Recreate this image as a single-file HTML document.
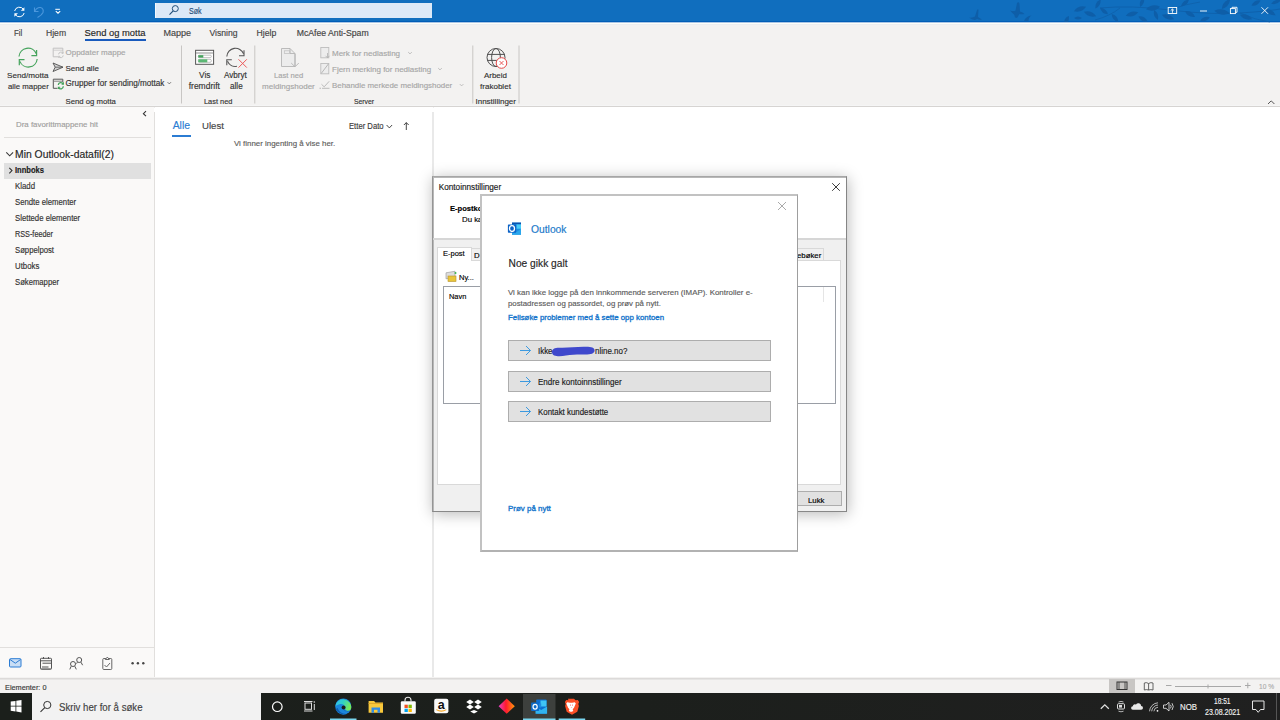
<!DOCTYPE html>
<html><head><meta charset="utf-8"><style>
html,body{margin:0;padding:0;width:1280px;height:720px;overflow:hidden;background:#fff}
body{position:relative;font-family:"Liberation Sans", sans-serif}
body>div{position:absolute}
.t{white-space:nowrap;-webkit-text-stroke:0.15px currentColor}
</style></head><body>
<div style="left:0px;top:0px;width:1280px;height:22px;background:#106ebe"></div><div style="left:0px;top:21px;width:1280px;height:1px;background:#005db6"></div><div style="left:155px;top:3px;width:277px;height:15px;background:#dce9f7"></div><div style="left:155px;top:3px;width:1px;height:15px;background:#f3f8fd"></div><div style="left:0px;top:23px;width:1280px;height:83px;background:#f3f2f1"></div><div style="left:0px;top:22px;width:1280px;height:1px;background:#a9c5e5"></div><div style="left:0px;top:23px;width:1280px;height:1px;background:#fefef8"></div><div style="left:0px;top:24px;width:1280px;height:1px;background:#eceef0"></div><div style="left:0px;top:105px;width:1280px;height:1px;background:#f5f5f5"></div><div style="left:0px;top:106px;width:1280px;height:1px;background:#d6d4d2"></div><div style="left:0px;top:107px;width:1280px;height:1px;background:#efefef"></div><div style="left:0px;top:107px;width:154px;height:570px;background:#faf9f8"></div><div style="left:154px;top:112px;width:1px;height:565px;background:#e1dfdd"></div><div style="left:155px;top:107px;width:278px;height:570px;background:#ffffff"></div><div style="left:432px;top:112px;width:2px;height:565px;background:#e9e9e9"></div><div style="left:434px;top:107px;width:846px;height:570px;background:#ffffff"></div><div style="left:0px;top:677px;width:1280px;height:16px;background:#f3f2f1"></div><div style="left:0px;top:678px;width:1280px;height:1px;background:#dcdad9"></div><div style="left:0px;top:679px;width:1280px;height:1px;background:#e6e5e4"></div><div style="left:0px;top:693px;width:1280px;height:27px;background:linear-gradient(90deg,#1b1f1b 0%,#1c1f1c 50%,#202020 100%)"></div><div style="left:32px;top:693px;width:229px;height:27px;background:#f2f2f2"></div><div class="t" style="left:14px;top:29px;font-size:8.8px;line-height:8.8px;color:#444444;font-weight:400;transform:scaleX(0.8928);transform-origin:0 0;">Fil</div><div class="t" style="left:46px;top:29px;font-size:8.6px;line-height:8.6px;color:#444444;font-weight:400;">Hjem</div><div class="t" style="left:84.5px;top:28px;font-size:9.4px;line-height:9.4px;color:#262626;font-weight:400;">Send og motta</div><div style="left:85px;top:39px;width:61px;height:2px;background:#185abd"></div><div class="t" style="left:163.5px;top:29px;font-size:9.0px;line-height:9.0px;color:#444444;font-weight:400;">Mappe</div><div class="t" style="left:209.5px;top:29px;font-size:8.65px;line-height:8.65px;color:#444444;font-weight:400;">Visning</div><div class="t" style="left:256.5px;top:29px;font-size:8.7px;line-height:8.7px;color:#444444;font-weight:400;">Hjelp</div><div class="t" style="left:296.7px;top:29px;font-size:8.7px;line-height:8.7px;color:#444444;font-weight:400;">McAfee Anti-Spam</div><div class="t" style="left:189.4px;top:7px;font-size:9.0px;line-height:9.0px;color:#1f4e79;font-weight:400;transform:scaleX(0.7867);transform-origin:0 0;">Søk</div><div class="t" style="left:7px;top:72px;font-size:8.1px;line-height:8.1px;color:#333333;font-weight:400;">Send/motta</div><div class="t" style="left:8px;top:83px;font-size:7.8px;line-height:7.8px;color:#333333;font-weight:400;">alle mapper</div><div class="t" style="left:65.5px;top:49px;font-size:8.0px;line-height:8.0px;color:#a6a6a6;font-weight:400;">Oppdater mappe</div><div class="t" style="left:65.5px;top:65px;font-size:8.0px;line-height:8.0px;color:#333333;font-weight:400;">Send alle</div><div class="t" style="left:65.5px;top:80px;font-size:8.15px;line-height:8.15px;color:#333333;font-weight:400;">Grupper for sending/mottak</div><div class="t" style="left:65.5px;top:98px;font-size:7.75px;line-height:7.75px;color:#333333;font-weight:400;">Send og motta</div><div class="t" style="left:199px;top:71px;font-size:8.3px;line-height:8.3px;color:#333333;font-weight:400;">Vis</div><div class="t" style="left:188.7px;top:82px;font-size:8.5px;line-height:8.5px;color:#333333;font-weight:400;">fremdrift</div><div class="t" style="left:224px;top:72px;font-size:8.15px;line-height:8.15px;color:#333333;font-weight:400;">Avbryt</div><div class="t" style="left:230px;top:83px;font-size:8.15px;line-height:8.15px;color:#333333;font-weight:400;">alle</div><div class="t" style="left:204px;top:98px;font-size:7.4px;line-height:7.4px;color:#333333;font-weight:400;">Last ned</div><div class="t" style="left:274px;top:72px;font-size:7.6px;line-height:7.6px;color:#a6a6a6;font-weight:400;">Last ned</div><div class="t" style="left:262px;top:83px;font-size:8.05px;line-height:8.05px;color:#a6a6a6;font-weight:400;">meldingshoder</div><div class="t" style="left:332px;top:50px;font-size:8.0px;line-height:8.0px;color:#a6a6a6;font-weight:400;">Merk for nedlasting</div><div class="t" style="left:332px;top:66px;font-size:8.0px;line-height:8.0px;color:#a6a6a6;font-weight:400;">Fjern merking for nedlasting</div><div class="t" style="left:332px;top:82px;font-size:7.9px;line-height:7.9px;color:#a6a6a6;font-weight:400;">Behandle merkede meldingshoder</div><div class="t" style="left:353.5px;top:98px;font-size:8.0px;line-height:8.0px;color:#333333;font-weight:400;transform:scaleX(0.8531);transform-origin:0 0;">Server</div><div class="t" style="left:484px;top:72px;font-size:7.95px;line-height:7.95px;color:#333333;font-weight:400;">Arbeid</div><div class="t" style="left:480px;top:83px;font-size:8.05px;line-height:8.05px;color:#333333;font-weight:400;">frakoblet</div><div class="t" style="left:475.5px;top:98px;font-size:8.0px;line-height:8.0px;color:#333333;font-weight:400;">Innstillinger</div><div class="t" style="left:16px;top:121px;font-size:7.9px;line-height:7.9px;color:#a19f9d;font-weight:400;">Dra favorittmappene hit</div><div style="left:4px;top:137px;width:147px;height:1px;background:#e1dfdd"></div><div class="t" style="left:15px;top:150px;font-size:10.36px;line-height:10.36px;color:#262626;font-weight:400;">Min Outlook-datafil(2)</div><div style="left:4px;top:163px;width:147px;height:16px;background:#e0e0e0"></div><div class="t" style="left:15px;top:166px;font-size:8.6px;line-height:8.6px;color:#1b1b1b;font-weight:700;transform:scaleX(0.8800);transform-origin:0 0;">Innboks</div><div class="t" style="left:14.8px;top:182px;font-size:8.4px;line-height:8.4px;color:#323130;font-weight:400;transform:scaleX(0.9336);transform-origin:0 0;">Kladd</div><div class="t" style="left:14.8px;top:198px;font-size:8.4px;line-height:8.4px;color:#323130;font-weight:400;transform:scaleX(0.9255);transform-origin:0 0;">Sendte elementer</div><div class="t" style="left:14.8px;top:214px;font-size:8.4px;line-height:8.4px;color:#323130;font-weight:400;transform:scaleX(0.9273);transform-origin:0 0;">Slettede elementer</div><div class="t" style="left:14.8px;top:230px;font-size:8.4px;line-height:8.4px;color:#323130;font-weight:400;transform:scaleX(0.8683);transform-origin:0 0;">RSS-feeder</div><div class="t" style="left:14.8px;top:246px;font-size:8.4px;line-height:8.4px;color:#323130;font-weight:400;transform:scaleX(0.9204);transform-origin:0 0;">Søppelpost</div><div class="t" style="left:14.8px;top:262px;font-size:8.4px;line-height:8.4px;color:#323130;font-weight:400;transform:scaleX(0.9318);transform-origin:0 0;">Utboks</div><div class="t" style="left:14.8px;top:278px;font-size:8.4px;line-height:8.4px;color:#323130;font-weight:400;transform:scaleX(0.9176);transform-origin:0 0;">Søkemapper</div><div style="left:0px;top:647px;width:154px;height:1px;background:#e1dfdd"></div><div class="t" style="left:172.7px;top:121px;font-size:10.4px;line-height:10.4px;color:#2b7cd3;font-weight:400;">Alle</div><div style="left:172px;top:135px;width:19px;height:1.5px;background:#2b7cd3"></div><div class="t" style="left:202px;top:121px;font-size:9.65px;line-height:9.65px;color:#444;font-weight:400;">Ulest</div><div class="t" style="left:348.6px;top:122px;font-size:9.0px;line-height:9.0px;color:#3b3a39;font-weight:400;transform:scaleX(0.8537);transform-origin:0 0;">Etter Dato</div><div class="t" style="left:234px;top:140px;font-size:7.9px;line-height:7.9px;color:#605e5c;font-weight:400;">Vi finner ingenting å vise her.</div><div class="t" style="left:5px;top:684px;font-size:7.6px;line-height:7.6px;color:#383838;font-weight:400;transform:scaleX(0.9637);transform-origin:0 0;">Elementer: 0</div><div class="t" style="left:1259px;top:683px;font-size:8.0px;line-height:8.0px;color:#ababab;font-weight:400;transform:scaleX(0.8226);transform-origin:0 0;">10 %</div><div class="t" style="left:58.5px;top:703px;font-size:10.4px;line-height:10.4px;color:#404040;font-weight:400;transform:scaleX(0.9270);transform-origin:0 0;">Skriv her for å søke</div><div class="t" style="left:1180px;top:702px;font-size:9.4px;line-height:9.4px;color:#f0f0f0;font-weight:400;transform:scaleX(0.8363);transform-origin:0 0;">NOB</div><div class="t" style="left:1214px;top:697px;font-size:9.0px;line-height:9.0px;color:#f0f0f0;font-weight:400;transform:scaleX(0.7323);transform-origin:0 0;">18:51</div><div class="t" style="left:1204.8px;top:708px;font-size:8.3px;line-height:8.3px;color:#f0f0f0;font-weight:400;transform:scaleX(0.8476);transform-origin:0 0;">23.08.2021</div><svg style="position:absolute;left:0;top:0" width="1280" height="720" viewBox="0 0 1280 720"><path d="M969 17.5q4 0.5 6-1l2-6.5q1-1.5 1.5 0l-0.5 7q2 1 4 2.5q-3 0.5-5-0.5q-3 2.5-8-1.5z" fill="#0e5ea8"/><path d="M1010 10.5q4 1 5.5 0l1.5-7.5q1.5-1.5 2.5 0.5l0.5 8q3 0.5 4.5 2.5q-3 0.5-5 0l-2.5 4q-3 0-2.5-3q-2-1.5-4.5-4.5z" fill="#0e5ea8"/><path d="M1024 21q2-5 7.5-5.5q-3 2-3 5.5z" fill="#0e5ea8"/><path d="M1064 22q1-5 5-6q0 4-1 6z" fill="#0e5ea8"/><path d="M1100 8Q1130 5 1170 10T1240 13T1280 9" stroke="#0e5ea8" stroke-width="0.8" fill="none"/><path d="M1120 8Q1110 16 1095 20M1170 10Q1185 4 1200 2M1240 13Q1255 20 1270 22" stroke="#0e5ea8" stroke-width="0.7" fill="none"/><path d="M-6.5 0Q0 -4.5 6.5 0Q0 4.5 -6.5 0Z" transform="translate(1080 9) rotate(-20)" fill="#0e5ea8"/><path d="M-6.5 0Q0 -4.5 6.5 0Q0 4.5 -6.5 0Z" transform="translate(1090 14) rotate(20)" fill="#0e5ea8"/><path d="M-5.2 0Q0 -3.75 5.2 0Q0 3.75 -5.2 0Z" transform="translate(1098 4) rotate(-60)" fill="#0e5ea8"/><path d="M-5.2 0Q0 -3.75 5.2 0Q0 3.75 -5.2 0Z" transform="translate(1104 11) rotate(40)" fill="#0e5ea8"/><path d="M-3.9000000000000004 0Q0 -3.0 3.9000000000000004 0Q0 3.0 -3.9000000000000004 0Z" transform="translate(1078 18) rotate(0)" fill="#0e5ea8"/><path d="M-6.5 0Q0 -4.5 6.5 0Q0 4.5 -6.5 0Z" transform="translate(1132 14) rotate(-15)" fill="#0e5ea8"/><path d="M-5.2 0Q0 -3.75 5.2 0Q0 3.75 -5.2 0Z" transform="translate(1143 19) rotate(30)" fill="#0e5ea8"/><path d="M-7.15 0Q0 -5.25 7.15 0Q0 5.25 -7.15 0Z" transform="translate(1153 8) rotate(-10)" fill="#0e5ea8"/><path d="M-5.2 0Q0 -3.75 5.2 0Q0 3.75 -5.2 0Z" transform="translate(1156 15) rotate(70)" fill="#0e5ea8"/><path d="M-5.2 0Q0 -3.75 5.2 0Q0 3.75 -5.2 0Z" transform="translate(1142 2) rotate(-70)" fill="#0e5ea8"/><path d="M-6.5 0Q0 -4.5 6.5 0Q0 4.5 -6.5 0Z" transform="translate(1168 17) rotate(20)" fill="#0e5ea8"/><path d="M-5.2 0Q0 -3.75 5.2 0Q0 3.75 -5.2 0Z" transform="translate(1185 3) rotate(-40)" fill="#0e5ea8"/><path d="M-5.8500000000000005 0Q0 -4.5 5.8500000000000005 0Q0 4.5 -5.8500000000000005 0Z" transform="translate(1190 14) rotate(30)" fill="#0e5ea8"/><path d="M-7.800000000000001 0Q0 -5.25 7.800000000000001 0Q0 5.25 -7.800000000000001 0Z" transform="translate(1222 12) rotate(10)" fill="#0e5ea8"/><path d="M-6.5 0Q0 -4.5 6.5 0Q0 4.5 -6.5 0Z" transform="translate(1226 4) rotate(-50)" fill="#0e5ea8"/><path d="M-6.5 0Q0 -4.5 6.5 0Q0 4.5 -6.5 0Z" transform="translate(1246 17) rotate(20)" fill="#0e5ea8"/><path d="M-5.2 0Q0 -3.75 5.2 0Q0 3.75 -5.2 0Z" transform="translate(1256 3) rotate(-30)" fill="#0e5ea8"/><path d="M-6.5 0Q0 -4.5 6.5 0Q0 4.5 -6.5 0Z" transform="translate(1270 12) rotate(30)" fill="#0e5ea8"/><path d="M-5.2 0Q0 -3.75 5.2 0Q0 3.75 -5.2 0Z" transform="translate(1276 2) rotate(-20)" fill="#0e5ea8"/><path d="M-5.2 0Q0 -3.75 5.2 0Q0 3.75 -5.2 0Z" transform="translate(1205 19) rotate(-20)" fill="#0e5ea8"/><path d="M-5.2 0Q0 -3.75 5.2 0Q0 3.75 -5.2 0Z" transform="translate(1115 18) rotate(50)" fill="#0e5ea8"/><path d="M14.6 11 A4.9 4.9 0 0 1 23.6 9.6" stroke="#fff" stroke-width="1" fill="none"/><path d="M24.4 7.2v3.6h-3.6z" fill="#fff"/><path d="M24.2 13 A4.9 4.9 0 0 1 15.2 14.4" stroke="#fff" stroke-width="1" fill="none"/><path d="M14.4 16.8v-3.6h3.6z" fill="#fff"/><path d="M34.5 11.5 Q37 7 40.5 7.5 Q44 8.5 43 12.5 Q42 15 37.5 17.5" stroke="#4b97dc" stroke-width="1.1" fill="none"/><path d="M34.5 7.5v4h4" stroke="#4b97dc" stroke-width="1.1" fill="none"/><path d="M55.3 9.3h4.6" stroke="#fff" stroke-width="1"/><path d="M55.8 11.2l2.2 2l2.2-2" stroke="#fff" stroke-width="1.1" fill="none"/><circle cx="175.3" cy="8.6" r="3" stroke="#1f4e79" stroke-width="1" fill="none"/><path d="M173.2 10.8L169.5 14.6" stroke="#1f4e79" stroke-width="1.1"/><rect x="1168.2" y="7.5" width="8.5" height="6" stroke="#fff" stroke-width="0.9" fill="none"/><path d="M1172.4 12.8v-3.6M1170.7 10.6l1.7-1.6l1.7 1.6" stroke="#fff" stroke-width="0.9" fill="none"/><path d="M1200 11h7" stroke="#fff" stroke-width="0.9"/><rect x="1230.4" y="8.6" width="5" height="5" stroke="#fff" stroke-width="0.9" fill="none"/><path d="M1232 8.6v-1.3h5v5h-1.5" stroke="#fff" stroke-width="0.9" fill="none"/><path d="M1261.5 7.3l6.5 6.5M1268 7.3l-6.5 6.5" stroke="#fff" stroke-width="0.9"/><path d="M19 56.5 A9 9 0 0 1 36.3 53.8" stroke="#45a35c" stroke-width="1.2" fill="none"/><path d="M36.6 50v5.6h-5.2" stroke="#45a35c" stroke-width="1.2" fill="none"/><path d="M37.2 59 A9 9 0 0 1 19.9 61.4" stroke="#45a35c" stroke-width="1.2" fill="none"/><path d="M19.3 65.3v-5.6h5.2" stroke="#45a35c" stroke-width="1.2" fill="none"/><path d="M58 56.8H53.2V48.2h9.6v3.5" stroke="#bcbcbc" stroke-width="0.9" fill="none"/><path d="M53.2 50.2h9.6" stroke="#c8c8c8" stroke-width="0.8"/><path d="M58.6 54.3 a2.4 2.4 0 0 1 4.4-1.1 M63.2 55.4 a2.4 2.4 0 0 1-4.4 1.2" stroke="#bdbdbd" stroke-width="0.9" fill="none"/><path d="M63.2 51.8v1.6h-1.6M58.6 57.9v-1.6h1.6" stroke="#bdbdbd" stroke-width="0.8" fill="none"/><path d="M53 63l10 4.2l-10 4.3l2.2-4.3z" stroke="#505050" stroke-width="0.9" fill="#d4d4d4" stroke-linejoin="round"/><path d="M55.2 67.2H63" stroke="#505050" stroke-width="0.8"/><path d="M57.5 88.3H53.3V79.2h9.5v3" stroke="#555" stroke-width="1" fill="none"/><path d="M53.3 81.2h9.5" stroke="#777" stroke-width="0.9"/><path d="M58.3 85 a2.6 2.6 0 0 1 4.8-1.2 M63.3 86.3 a2.6 2.6 0 0 1-4.8 1.4" stroke="#45a35c" stroke-width="1.3" fill="none"/><path d="M63.4 82.3v1.8h-1.8M58.4 89.1v-1.8h1.8" stroke="#45a35c" stroke-width="1.1" fill="none"/><rect x="195.6" y="50.3" width="18" height="14" stroke="#555" stroke-width="1" fill="#fff"/><path d="M196 53h17.2" stroke="#a0a0a0" stroke-width="1.2"/><rect x="198.3" y="55.2" width="13" height="2.4" rx="1" stroke="#9a9a9a" stroke-width="0.6" fill="#fff"/><rect x="198.3" y="55.2" width="5" height="2.4" fill="#45a35c"/><rect x="198.3" y="59.3" width="13" height="3" rx="1.2" stroke="#9a9a9a" stroke-width="0.6" fill="#fff"/><rect x="198.3" y="59.3" width="9" height="3" fill="#5cb874"/><path d="M226.8 56.5 A8.7 8.7 0 0 1 243.6 53.8" stroke="#555" stroke-width="1.1" fill="none"/><path d="M244 50.3v5.5h-5" stroke="#555" stroke-width="1.1" fill="none"/><path d="M237 66.3 A8.7 8.7 0 0 1 227.5 61.2" stroke="#555" stroke-width="1.1" fill="none"/><path d="M226.8 65.3v-5.5h5" stroke="#555" stroke-width="1.1" fill="none"/><path d="M238.5 59.3l8.3 8.3M246.8 59.3l-8.3 8.3" stroke="#ec5b5b" stroke-width="1"/><path d="M281.5 48.5h8.5l5 5v13h-13.5z" stroke="#b4b4b4" stroke-width="0.9" fill="#ececec"/><path d="M290 48.5v5h5" stroke="#b4b4b4" stroke-width="0.9" fill="none"/><rect x="284.3" y="50.8" width="5.5" height="2.6" stroke="#bdbdbd" stroke-width="0.7" fill="none"/><path d="M295 54v12.5M291.2 63l3.8 3.8l3.8-3.8" stroke="#b4b4b4" stroke-width="0.9" fill="none"/><rect x="320.8" y="47.5" width="8" height="10.3" stroke="#bdbdbd" stroke-width="0.9" fill="#ededed"/><path d="M327.5 53v4.5M325.5 55.8l2 2l2-2" stroke="#b0b0b0" stroke-width="0.8" fill="none"/><rect x="320.8" y="63.5" width="8" height="10.3" stroke="#bdbdbd" stroke-width="0.9" fill="#ededed"/><path d="M321.2 73.5l7.3-9.7" stroke="#b0b0b0" stroke-width="0.9"/><path d="M321.5 84.3l2.7 2.5l5-5.5" stroke="#b4b4b4" stroke-width="0.9" fill="none"/><path d="M322 88.3h7.5" stroke="#b4b4b4" stroke-width="0.9"/><rect x="319.6" y="87.7" width="1.2" height="1.2" fill="#b4b4b4"/><path d="M408.2 52.1l1.8 1.8l1.8-1.8" stroke="#b0b0b0" stroke-width="0.8" fill="none"/><path d="M438.2 68.1l1.8 1.8l1.8-1.8" stroke="#b0b0b0" stroke-width="0.8" fill="none"/><path d="M459.8 84.1l1.8 1.8l1.8-1.8" stroke="#b0b0b0" stroke-width="0.8" fill="none"/><path d="M167.6 82.2l1.7 1.7l1.7-1.7" stroke="#555" stroke-width="0.8" fill="none"/><circle cx="496" cy="57.5" r="9" stroke="#505050" stroke-width="1" fill="none"/><ellipse cx="496" cy="57.5" rx="4.4" ry="9" stroke="#505050" stroke-width="1" fill="none"/><path d="M487.5 54.4h17M487.5 60.4h17" stroke="#505050" stroke-width="1"/><circle cx="501.5" cy="63" r="5.3" fill="#fff" stroke="#e64a4a" stroke-width="1"/><path d="M499.5 61l4 4M503.5 61l-4 4" stroke="#e64a4a" stroke-width="0.9"/><path d="M181.5 45.5V103.5" stroke="#c8c6c4" stroke-width="1"/><path d="M254.8 45.5V103.5" stroke="#c8c6c4" stroke-width="1"/><path d="M472.8 45.5V103.5" stroke="#c8c6c4" stroke-width="1"/><path d="M519 45.5V103.5" stroke="#c8c6c4" stroke-width="1"/><path d="M1268 104l3.2-3.2l3.2 3.2" stroke="#444" stroke-width="0.9" fill="none"/><path d="M146 111.2l-2.6 2.5l2.6 2.5" stroke="#333" stroke-width="1.1" fill="none"/><path d="M6.3 152.3l3.4 3.5l3.4-3.5" stroke="#3a3a3a" stroke-width="1.1" fill="none"/><path d="M9.3 167.8l2.7 2.8l-2.7 2.8" stroke="#333" stroke-width="1.1" fill="none"/><path d="M386.6 125l2.75 2.9l2.75-2.9" stroke="#333" stroke-width="0.9" fill="none"/><path d="M406.3 130V122.6M403.9 125l2.4-2.4l2.4 2.4" stroke="#333" stroke-width="0.9" fill="none"/><rect x="9.5" y="658.7" width="11.5" height="8.3" rx="1" stroke="#2b7cd3" stroke-width="1" fill="#c9def5"/><path d="M10 659.5l5.3 3.7l5.3-3.7" stroke="#2b7cd3" stroke-width="1" fill="none"/><rect x="40.5" y="658.3" width="11" height="11" rx="0.8" stroke="#555" stroke-width="1" fill="none"/><path d="M40.5 660.8h11M42.5 663.2h8.5M42 667h6.5M43.5 657v2M48.5 657v2" stroke="#555" stroke-width="1"/><path d="M41 668.5h10" stroke="#999" stroke-width="1"/><circle cx="73" cy="664" r="2.5" stroke="#555" stroke-width="1" fill="none"/><path d="M71.2 666.2L69.8 669.4M74.8 666.2L76.3 669.4" stroke="#555" stroke-width="1" fill="none"/><circle cx="79.2" cy="660" r="2.5" stroke="#555" stroke-width="1" fill="none"/><path d="M81 662.2L82.6 665.2M77.4 662.2L76.6 663.6" stroke="#555" stroke-width="1" fill="none"/><rect x="102.8" y="658.5" width="9" height="11" rx="1" stroke="#666" stroke-width="1" fill="none"/><path d="M105.3 659.5 l1.5-2 h1 l1.5 2 z" stroke="#666" stroke-width="1" fill="#fff"/><path d="M104.5 665l2 2l3.5-4" stroke="#666" stroke-width="1" fill="none"/><circle cx="132.6" cy="663.3" r="1.2" fill="#444"/><circle cx="137.9" cy="663.3" r="1.2" fill="#444"/><circle cx="143.3" cy="663.3" r="1.2" fill="#444"/><rect x="1109" y="679" width="26" height="14" fill="#c8c6c4"/><rect x="1117" y="682" width="10" height="7.5" stroke="#333" stroke-width="1" fill="none"/><path d="M1119 682v7.5M1125 682v7.5" stroke="#333" stroke-width="0.8"/><path d="M1144.3 683v7M1153 683v7M1148.6 683.5v6.5" stroke="#555" stroke-width="0.9"/><path d="M1144.3 683q2-1 4.3 0.5q2.3-1.5 4.4-0.5M1144.3 690q2-0.8 4.3 0q2.3-0.8 4.4 0" stroke="#555" stroke-width="0.9" fill="none"/><path d="M1166 685.5h5.5M1175 686.5h66M1245 685.5h5.5M1247.8 682.7v5.6M1208 684.5v4" stroke="#a8a8a8" stroke-width="1"/><path d="M10.7 701.6l4.8-0.7v4.9h-4.8zM16.3 700.8l5.2-0.8v5.8h-5.2zM10.7 706.6h4.8v4.9l-4.8-0.7zM16.3 706.6h5.2v5.8l-5.2-0.8z" fill="#fff"/><circle cx="47.3" cy="705" r="3.6" stroke="#333" stroke-width="1" fill="none"/><path d="M44.8 707.6L40.5 711.8" stroke="#333" stroke-width="1.1"/><circle cx="277.3" cy="706.7" r="4.8" stroke="#fff" stroke-width="1.2" fill="none"/><rect x="305" y="703" width="6.5" height="6.3" stroke="#ddd" stroke-width="1" fill="none"/><path d="M304 701.5h8.5M304 711h8.5M314.3 704v6" stroke="#ddd" stroke-width="1"/><circle cx="314.3" cy="702" r="0.8" fill="#ddd"/><defs><linearGradient id="eg" x1="0" y1="0" x2="1" y2="0.3"><stop offset="0" stop-color="#33bdf2"/><stop offset="0.5" stop-color="#2fd0c8"/><stop offset="1" stop-color="#74ea5c"/></linearGradient><linearGradient id="eg2" x1="0" y1="0" x2="1" y2="0"><stop offset="0" stop-color="#4bd08a"/><stop offset="1" stop-color="#7fe07a"/></linearGradient><linearGradient id="dg" x1="0" y1="0" x2="1" y2="0"><stop offset="0" stop-color="#e840c8"/><stop offset="0.45" stop-color="#ff1a2e"/><stop offset="1" stop-color="#ff9a0a"/></linearGradient></defs><g transform="translate(343.3 706.6)"><circle r="8.1" fill="#1a86dd"/><path d="M-8 -0.8 A8.1 8.1 0 0 1 8 1.5 C7.6 3.6 5.4 4.6 3.6 4 C1.8 3.4 1.3 1.6 1.5 0.2 C1.4 -1.8 -0.8 -3 -3 -2.6 C-5.2 -2.2 -6.8 -1.2 -8 -0.8Z" fill="url(#eg)"/><ellipse cx="0.3" cy="0.9" rx="2" ry="1.9" fill="#1c1e1c"/><path d="M0.3 2.8 C1.5 4.4 3.8 5 6.2 4.2 C4 5.2 1.8 5 0.3 2.8Z" fill="#123a5a"/><path d="M-7.5 2.5 C-6 6.5 -1 8.6 3.5 7.4 C-0.5 7.6 -4.5 5.5 -5.6 1.5Z" fill="#0f5db0"/></g><path d="M368.6 701h5.5l1.3 1.5h7.6v10.3h-14.4z" fill="#f8c83c"/><path d="M368.6 703.5h14.4" stroke="#e0a82a" stroke-width="1"/><path d="M371.5 707.5h8.5v5.3h-2.5v-3h-3.5v3h-2.5z" fill="#2f8be6"/><path d="M405 701.5v-1.2a3 3 0 0 1 6 0v1.2" stroke="#e8e8e8" stroke-width="1.1" fill="none"/><rect x="400.8" y="701.2" width="15" height="12.5" rx="1.2" fill="#fafafa"/><rect x="404.5" y="704.7" width="3.3" height="3.3" fill="#f25022"/><rect x="408.5" y="704.7" width="3.3" height="3.3" fill="#7fba00"/><rect x="404.5" y="708.7" width="3.3" height="3.3" fill="#00a4ef"/><rect x="408.5" y="708.7" width="3.3" height="3.3" fill="#ffb900"/><rect x="434.2" y="698.7" width="14.2" height="14.5" rx="2" fill="#fafafa"/><text x="441.3" y="709.3" text-anchor="middle" font-family="Liberation Sans" font-weight="700" font-size="12.5" fill="#111">a</text><path d="M436.3 709.6 q5 3 10 0" stroke="#f5a623" stroke-width="1.1" fill="none"/><path d="M470 699.5l-3.8 2.5l3.8 2.5l3.8-2.5zM478 699.5l-3.8 2.5l3.8 2.5l3.8-2.5zM470 704.5l-3.8 2.5l3.8 2.5l3.8-2.5zM478 704.5l-3.8 2.5l3.8 2.5l3.8-2.5zM474 710l-3.8 1.5l3.8 2l3.8-2z" fill="#fff"/><path d="M506.7 698.6l8.1 7.6l-8.1 7.6l-8.1-7.6z" fill="url(#dg)"/><rect x="523" y="694" width="32.5" height="26" fill="#3d403d"/><rect x="536.2" y="699.4" width="10.4" height="14.3" rx="0.8" fill="#0d6fd0"/><rect x="540.5" y="700.5" width="6" height="6" fill="#3fc4f5"/><rect x="536.2" y="703.5" width="5" height="4" fill="#1e8be0"/><path d="M535.5 706.5l5.7 3.4l5.9-3.4v7.2h-11.6z" fill="#31b4f0"/><rect x="531.1" y="702.6" width="8" height="8.4" rx="0.8" fill="#0f6cc9"/><ellipse cx="535.1" cy="706.8" rx="2.1" ry="2.4" stroke="#fff" stroke-width="1.2" fill="none"/><path d="M568 698.8h6l1.6 1.4l2.2-0.3l1.3 2.2l-0.8 1.8l0.6 2l-1.6 5.8l-5.3 3l-5.3-3l-1.6-5.8l0.6-2l-0.8-1.8l1.3-2.2l2.2 0.3z" fill="#fb4f26"/><path d="M567.3 702.2l2.7 0.5h2.1l2.7-0.5l1 1.3l-1.8 4.2l-1.3 1.6l0.6 1.8l-1.6 0.6h-1.3l-1.6-0.6l0.6-1.8l-1.3-1.6l-1.8-4.2z" fill="#fff"/><path d="M570 704.5h1v1.2h-1zM572 704.5h1v1.2h-1zM570.6 707l0.9 0.8l0.9-0.8" fill="#f88" stroke="none"/><rect x="330" y="718.5" width="26.5" height="1.5" fill="#7ad7f0"/><rect x="523" y="718.5" width="32.5" height="1.5" fill="#7ad7f0"/><rect x="558.7" y="718.5" width="26.5" height="1.5" fill="#7ad7f0"/><path d="M1100.8 708.8l4-4l4 4" stroke="#e0e0e0" stroke-width="1.25" fill="none"/><rect x="1117.5" y="703.7" width="7" height="5.3" rx="1" stroke="#ddd" stroke-width="1" fill="none"/><rect x="1119" y="705" width="3" height="2.6" fill="#ddd"/><path d="M1118.5 702q2.5-1.2 5 0M1118.5 711.2q2.5 1.2 5 0" stroke="#ddd" stroke-width="0.8" fill="none"/><path d="M1132.8 709.7h8.2a1.9 1.9 0 0 0 0.2-3.8a2.8 2.8 0 0 0-5.2-1.3a2.2 2.2 0 0 0-3.2 1.7a1.7 1.7 0 0 0 0 3.4z" fill="#e8e8e8"/><path d="M1149.5 711.3a9 9 0 0 1 8.5-8.5M1151.7 711.3a6.6 6.6 0 0 1 6.3-6.3M1153.9 711.3a4.4 4.4 0 0 1 4.1-4.1" stroke="#ddd" stroke-width="0.8" fill="none"/><circle cx="1157.5" cy="710.8" r="0.9" fill="#fff"/><path d="M1163.5 705h2.5l3-2.7v8.7l-3-2.7h-2.5z" stroke="#ddd" stroke-width="0.9" fill="none"/><path d="M1170.5 704.8q1.3 1.8 0 3.6M1172 703.2q2.5 3.4 0 6.8" stroke="#ddd" stroke-width="0.9" fill="none"/><path d="M1252.5 701h11.5v8.5h-3.5l-2.3 2.8l-2.3-2.8h-3.4z" stroke="#e6e6e6" stroke-width="1" fill="none"/><path d="M1276.5 693v27" stroke="#555" stroke-width="1"/></svg><div style="left:432px;top:176px;width:415px;height:336px;box-sizing:border-box;background:#f0f0f0;border:1px solid;border-color:#a6a6a6 #858585 #888888 #959595;box-shadow:1px 2px 14px rgba(0,0,0,0.28), inset 1px 1px 0 #b8b8b8"></div><div style="left:434px;top:178px;width:412px;height:60px;background:#ffffff"></div><div style="left:433px;top:238px;width:413px;height:2px;background:#d6d6d6"></div><div class="t" style="left:438.75px;top:184px;font-size:8.2px;line-height:8.2px;color:#1a1a1a;font-weight:400;">Kontoinnstillinger</div><svg style="position:absolute;left:831px;top:182px;" width="10" height="10" viewBox="0 0 10 10"><path d="M1.2 1.2L8.8 8.8M8.8 1.2L1.2 8.8" stroke="#1a1a1a" stroke-width="0.85"/></svg><div class="t" style="left:450px;top:205px;font-size:7.6px;line-height:7.6px;color:#000;font-weight:700;">E-postko</div><div class="t" style="left:462px;top:216px;font-size:7.8px;line-height:7.8px;color:#000;font-weight:400;">Du ka</div><div style="left:471px;top:248px;width:40px;height:13px;box-sizing:border-box;background:#f0f0f0;border:1px solid #d9d9d9;border-bottom:none"></div><div class="t" style="left:474px;top:252px;font-size:7.8px;line-height:7.8px;color:#000;font-weight:400;">D</div><div style="left:780px;top:248px;width:44px;height:13px;box-sizing:border-box;background:#f0f0f0;border:1px solid #d9d9d9;border-bottom:none"></div><div class="t" style="left:797px;top:252px;font-size:7.8px;line-height:7.8px;color:#000;font-weight:400;">ebøker</div><div style="left:437px;top:260px;width:404px;height:225px;box-sizing:border-box;background:#fff;border:1px solid #d9d9d9;border-top-color:#d9d9d9"></div><div style="left:437px;top:247px;width:35px;height:14px;box-sizing:border-box;background:#fff;border:1px solid #d9d9d9;border-bottom:none"></div><div style="left:438px;top:259px;width:33px;height:2px;background:#fff"></div><div class="t" style="left:443px;top:250px;font-size:7.5px;line-height:7.5px;color:#000;font-weight:400;">E-post</div><svg style="position:absolute;left:445px;top:270px;" width="12" height="12" viewBox="0 0 12 12"><rect x="1" y="3" width="9" height="6" fill="#ddd" stroke="#999" stroke-width="0.6" transform="skewY(-10)"/><rect x="3" y="6" width="8" height="5.5" fill="#e8c53a" stroke="#b9932a" stroke-width="0.6"/><circle cx="10.5" cy="3" r="1" fill="#3bb54a"/></svg><div class="t" style="left:459px;top:274px;font-size:7.5px;line-height:7.5px;color:#000;font-weight:400;">Ny...</div><div style="left:443px;top:286px;width:393px;height:118px;box-sizing:border-box;background:#fff;border:1px solid #9a9ea6"></div><div class="t" style="left:449px;top:293px;font-size:7.4px;line-height:7.4px;color:#000;font-weight:400;">Navn</div><div style="left:823px;top:287px;width:1px;height:15px;background:#e5e5e5"></div><div style="left:780px;top:491px;width:62px;height:15px;box-sizing:border-box;background:#e1e1e1;border:1px solid #adadad"></div><div class="t" style="left:808px;top:497px;font-size:7.8px;line-height:7.8px;color:#000;font-weight:400;">Lukk</div><div style="left:480px;top:194px;width:318px;height:358px;box-sizing:border-box;background:#fff;border-style:solid;border-color:#c2c2c2 #9e9e9e #b2b2b2 #c2c2c2;border-width:2px 1px 2px 2px"></div><svg style="position:absolute;left:777px;top:201px;" width="10" height="10" viewBox="0 0 10 10"><path d="M1 1L9 9M9 1L1 9" stroke="#a0a0a0" stroke-width="0.9"/></svg><svg style="position:absolute;left:507px;top:221px;" width="16" height="15" viewBox="0 0 16 15"><rect x="5" y="1.6" width="9" height="12.1" fill="#1b8fe2"/><rect x="9.5" y="3.2" width="4.5" height="4.5" fill="#48cdf8"/><rect x="5" y="1.6" width="9" height="1.6" fill="#0c52ad"/><path d="M5 8l4.5 3l4.5-3v5.7h-9z" fill="#2aa6ec"/><rect x="0.9" y="3.5" width="8.3" height="8.2" rx="0.6" fill="#0b62c6"/><ellipse cx="5" cy="7.6" rx="2.5" ry="2.9" fill="none" stroke="#fff" stroke-width="1.3"/></svg><div class="t" style="left:531px;top:225px;font-size:10.3px;line-height:10.3px;color:#1979ca;font-weight:400;">Outlook</div><div class="t" style="left:508.6px;top:259px;font-size:10.2px;line-height:10.2px;color:#262626;font-weight:400;">Noe gikk galt</div><div class="t" style="left:508px;top:289px;font-size:7.9px;line-height:7.9px;color:#5c5c5c;font-weight:400;transform:scaleX(1.0004);transform-origin:0 0;">Vi kan ikke logge på den innkommende serveren (IMAP). Kontroller e-</div><div class="t" style="left:508px;top:300px;font-size:7.8px;line-height:7.8px;color:#5c5c5c;font-weight:400;transform:scaleX(1.0016);transform-origin:0 0;">postadressen og passordet, og prøv på nytt.</div><div class="t" style="left:508px;top:314px;font-size:8.0px;line-height:8.0px;color:#1776cc;font-weight:400;transform:scaleX(0.9827);transform-origin:0 0;-webkit-text-stroke:0.35px #1776cc">Feilsøke problemer med å sette opp kontoen</div><div style="left:508px;top:340px;width:263px;height:21px;box-sizing:border-box;background:#e1e1e1;border:1px solid #adadad"></div><svg style="position:absolute;left:519px;top:345px;" width="13" height="11" viewBox="0 0 13 11"><path d="M1 5.5H11.5M7 1L11.5 5.5L7 10" fill="none" stroke="#3d9ae0" stroke-width="1"/></svg><div class="t" style="left:537.5px;top:347px;font-size:8.5px;line-height:8.5px;color:#1a1a1a;font-weight:400;transform:scaleX(0.9299);transform-origin:0 0;">Ikke</div><div style="left:508px;top:371px;width:263px;height:21px;box-sizing:border-box;background:#e1e1e1;border:1px solid #adadad"></div><svg style="position:absolute;left:519px;top:376px;" width="13" height="11" viewBox="0 0 13 11"><path d="M1 5.5H11.5M7 1L11.5 5.5L7 10" fill="none" stroke="#3d9ae0" stroke-width="1"/></svg><div class="t" style="left:537.5px;top:378px;font-size:8.5px;line-height:8.5px;color:#1a1a1a;font-weight:400;transform:scaleX(0.9478);transform-origin:0 0;">Endre kontoinnstillinger</div><div style="left:508px;top:401px;width:263px;height:21px;box-sizing:border-box;background:#e1e1e1;border:1px solid #adadad"></div><svg style="position:absolute;left:519px;top:406px;" width="13" height="11" viewBox="0 0 13 11"><path d="M1 5.5H11.5M7 1L11.5 5.5L7 10" fill="none" stroke="#3d9ae0" stroke-width="1"/></svg><div class="t" style="left:537.5px;top:408px;font-size:8.5px;line-height:8.5px;color:#1a1a1a;font-weight:400;transform:scaleX(0.9291);transform-origin:0 0;">Kontakt kundestøtte</div><div class="t" style="left:594.5px;top:347px;font-size:8.5px;line-height:8.5px;color:#1a1a1a;font-weight:400;transform:scaleX(0.9387);transform-origin:0 0;">nline.no?</div><svg style="position:absolute;left:550px;top:345px;" width="46" height="12" viewBox="0 0 46 12"><path d="M2 7.2 C1.8 3.8 5 2.6 9.5 2.7 C17 2.9 25 2.2 33.5 1.8 C40 1.4 44.6 2.2 44.6 5.3 C44.6 9 40.5 9.6 34 9.5 C27 9.4 22 9.6 16 10.6 C9.5 11.8 2.2 11.8 2 7.2Z" fill="#3f48cc"/></svg><div class="t" style="left:507.9px;top:505px;font-size:8.0px;line-height:8.0px;color:#1776cc;font-weight:400;transform:scaleX(0.9925);transform-origin:0 0;-webkit-text-stroke:0.35px #1776cc">Prøv på nytt</div>
</body></html>
